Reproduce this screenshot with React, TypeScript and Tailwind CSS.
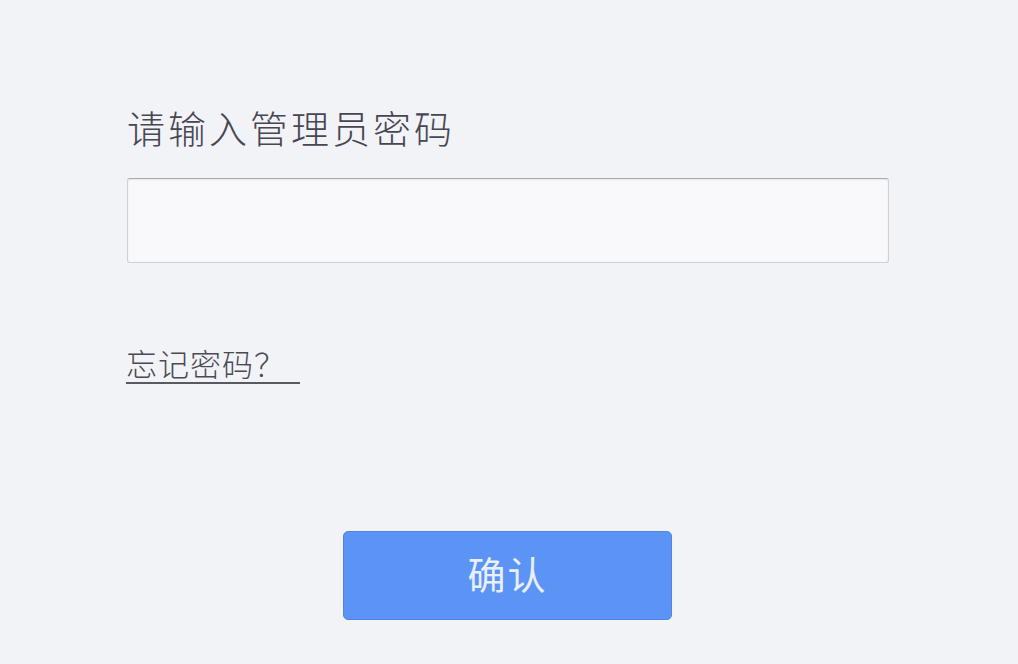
import { useState } from "react"

export default function App() {
  const [password, setPassword] = useState("")

  return (
    <div
      className="w-[1018px] h-[664px] bg-[#f2f3f6] overflow-hidden flex flex-col pl-[127px] pr-[129px]"
      style={{ fontFamily: '"Noto Sans CJK SC", "Noto Sans", sans-serif' }}
    >
      {/* Title */}
      <h1 className="mt-[103px] h-[48px] text-[38px] leading-[48px] tracking-[3px] font-light text-[#474652]">
        请输入管理员密码
      </h1>

      {/* Password input */}
      <input
        type="password"
        value={password}
        onChange={(e) => setPassword(e.target.value)}
        className="mt-[27px] w-[762px] h-[85px] bg-[#f9f9fb] border border-[#cfd0d4] border-t-[#a9aab0] rounded-[3px] shadow-[inset_0_1px_2px_rgba(0,0,0,0.08)] px-4 text-[24px] outline-none"
      />

      {/* Forgot password */}
      <div className="mt-[81px] flex">
        <a
          href="#"
          className="text-[31px] leading-[38px] tracking-[1px] text-[#4a4954] font-light border-b-2 border-[#5a5963] pr-[14px] pb-0 -ml-px"
        >
          忘记密码？
        </a>
      </div>

      {/* Confirm */}
      <div className="mt-[147px] flex pl-[216px]">
        <button className="w-[329px] h-[89px] pb-[6px] rounded-[5px] bg-[#5b94f4] border border-[#4f86e6] text-[38px] font-normal tracking-[2px] text-[#e9effc]">
          确认
        </button>
      </div>
    </div>
  )
}
